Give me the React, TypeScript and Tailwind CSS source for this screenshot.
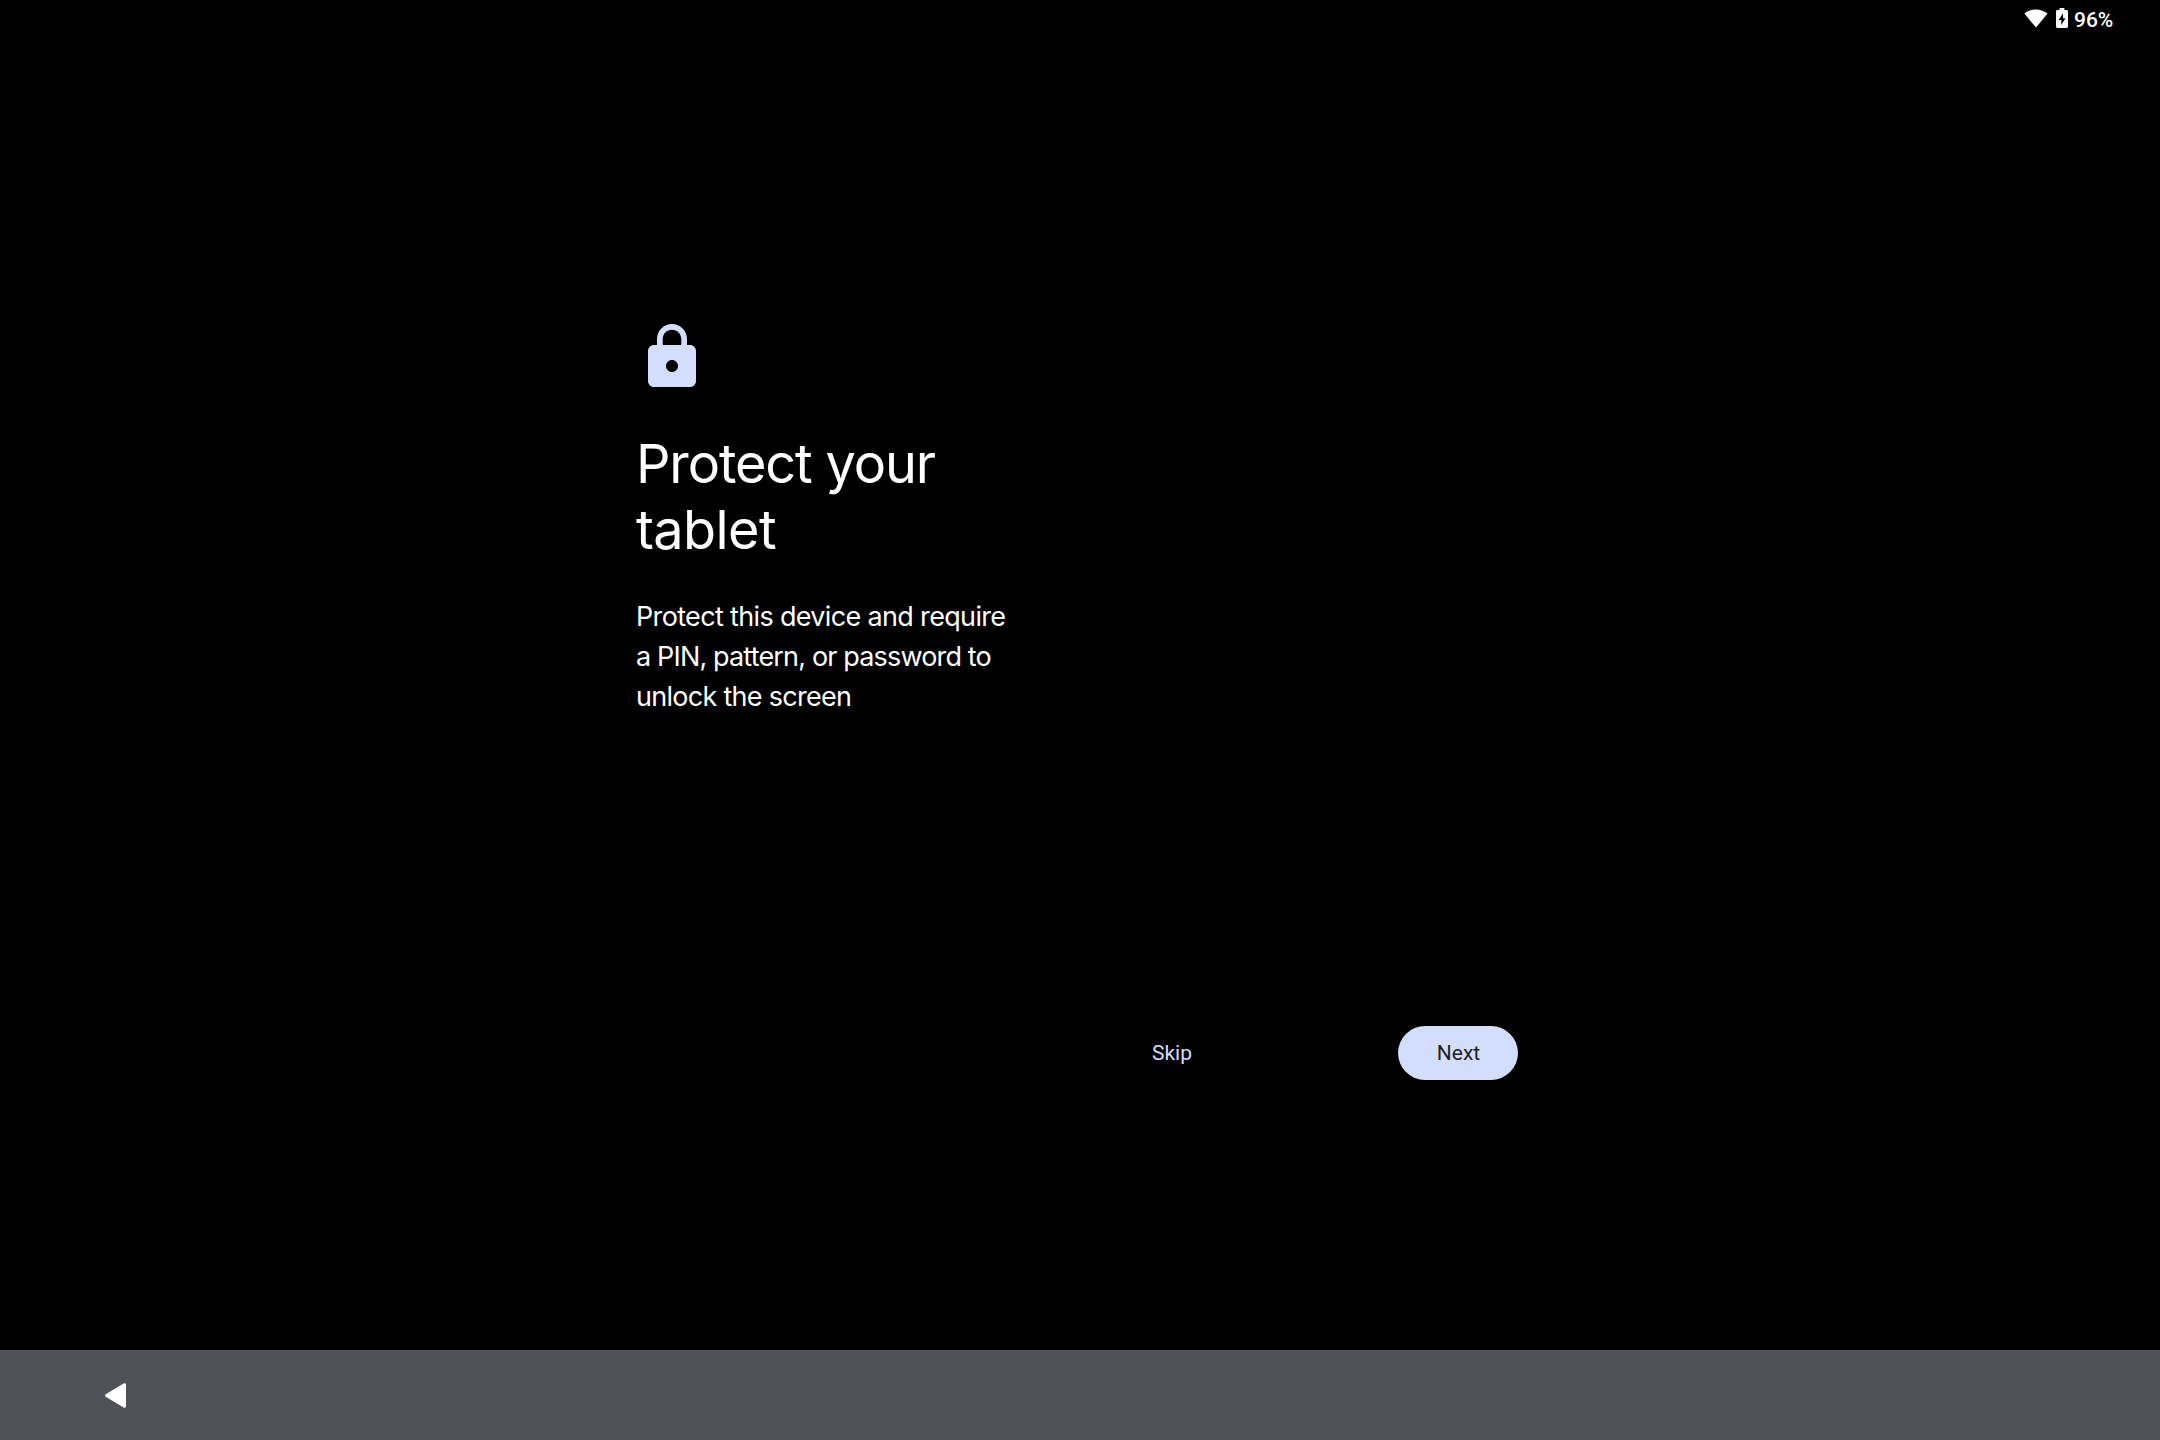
function StatusBar() {
  return (
    <header className="flex h-9 shrink-0 justify-end pr-[49px] font-['Roboto',sans-serif] text-white">
      <svg className="mt-[9px] h-[19px] w-6" viewBox="0 0 24 19" fill="currentColor">
        <path d="M12 18.6 0.4 4.6C3.6 2 7.6 0.4 12 0.4s8.4 1.6 11.6 4.2z" />
      </svg>
      <svg className="mt-2 ml-2 h-5 w-3" viewBox="0 0 12 20" fill="currentColor">
        <path
          fillRule="evenodd"
          d="M3.6 0h4.8v2h2.2C11.4 2 12 2.6 12 3.4v15.2c0 .8-.6 1.4-1.4 1.4H1.4C.6 20 0 19.4 0 18.6V3.4C0 2.6.6 2 1.4 2h2.2zM7 5.2 2.7 12h2.6v5l4.1-6.8H7z"
        />
      </svg>
      <span className="mt-2 ml-1.5 w-[37px] text-[21px] leading-6 font-medium whitespace-nowrap">96%</span>
    </header>
  );
}

export default function App() {
  return (
    <div className="flex h-[1440px] w-[2160px] flex-col overflow-hidden bg-black">
      <StatusBar />
      <main className="flex flex-1 flex-col pl-[636px] font-['Inter','Roboto',sans-serif] text-white">
        <svg className="mt-[285px] size-[72px] text-[#d3deff]" viewBox="0 0 24 24" fill="currentColor">
          <path d="M18 8h-1V6c0-2.76-2.24-5-5-5S7 3.24 7 6v2H6c-1.1 0-2 .9-2 2v10c0 1.1.9 2 2 2h12c1.1 0 2-.9 2-2V10c0-1.1-.9-2-2-2zm-6 9c-1.1 0-2-.9-2-2s.9-2 2-2 2 .9 2 2-.9 2-2 2zm3.1-9H8.9V6c0-1.71 1.39-3.1 3.1-3.1s3.1 1.39 3.1 3.1z" />
        </svg>
        <h1 className="mt-[38px] text-[54px] leading-[66px] whitespace-nowrap">
          <span className="block tracking-[-1.13px]">Protect your</span>
          <span className="block tracking-[-0.6px]">tablet</span>
        </h1>
        <p className="mt-[34px] text-[27px] leading-10 whitespace-nowrap">
          <span className="block tracking-[-0.66px]">Protect this device and require</span>
          <span className="block tracking-[-0.84px]">a PIN, pattern, or password to</span>
          <span className="block tracking-[-0.72px]">unlock the screen</span>
        </p>
        <div className="mt-[309px] flex h-[54px] items-center pl-[480px] font-['Roboto',sans-serif] text-[21px]">
          <button className="h-[54px] w-[112px] pt-0.5 text-[#d3deff]">Skip</button>
          <button className="ml-[170px] h-[54px] w-[120px] rounded-full bg-[#d3deff] pt-0.5 pl-px text-[#1f1f1f]">
            Next
          </button>
        </div>
      </main>
      <nav className="flex h-[90px] shrink-0 items-center bg-[#505156] pl-[105px]">
        <svg className="h-[25px] w-[21px] text-white" viewBox="0 0 21 25" fill="currentColor">
          <path d="M.7 11.3 18.6.5C19.7-.2 21 .4 21 1.7v21.6c0 1.3-1.3 1.9-2.4 1.2L.7 13.7c-.9-.6-.9-1.8 0-2.4z" />
        </svg>
      </nav>
    </div>
  );
}
